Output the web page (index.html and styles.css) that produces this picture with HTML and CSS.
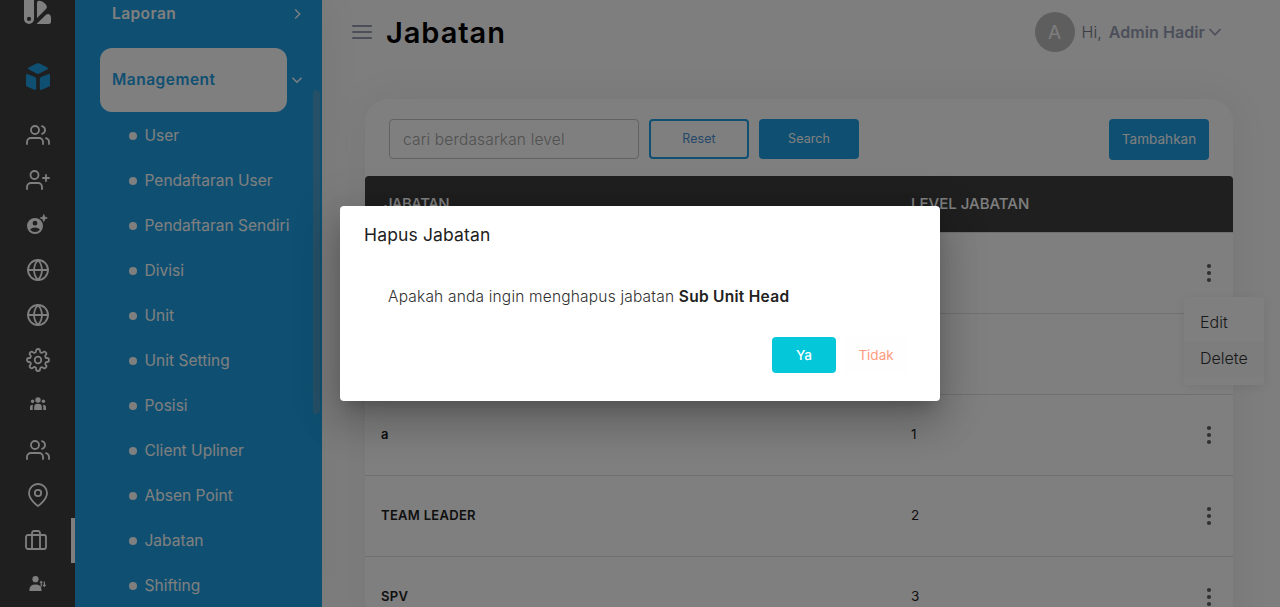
FILE: index.html
```html
<!DOCTYPE html>
<html lang="id">
<head>
<meta charset="utf-8">
<title>Jabatan</title>
<link rel="stylesheet" href="styles.css">
</head>
<body>
<svg class="defs" width="0" height="0" aria-hidden="true">
  <symbol id="users" viewBox="0 0 24 24"><path d="M17 21v-2a4 4 0 0 0-4-4H5a4 4 0 0 0-4 4v2M23 21v-2a4 4 0 0 0-3-3.870M16 3.130a4 4 0 0 1 0 7.750"/><circle cx="9" cy="7" r="4"/></symbol>
  <symbol id="globe" viewBox="0 0 24 24"><circle cx="12" cy="12" r="10"/><path d="M2 12h20M12 2a15.300 15.300 0 0 1 4 10 15.300 15.300 0 0 1-4 10 15.300 15.300 0 0 1-4-10 15.300 15.300 0 0 1 4-10z"/></symbol>
  <symbol id="dots" viewBox="0 0 6 20"><circle cx="3" cy="3" r="2.100"/><circle cx="3" cy="10" r="2.100"/><circle cx="3" cy="17" r="2.100"/></symbol>
</svg>
<div class="app">
  <nav class="rail">
    <div class="logo"><svg width="28" height="28" viewBox="0 0 28 28"><path fill-rule="evenodd" d="M0 0h10v23a5 5 0 0 1-10 0zM5 20.800a2.100 2.100 0 1 0 0 4.200a2.100 2.100 0 0 0 0-4.200z"/><path d="M13 7q0-2.500 2.500-2.200 4.500.7 7 4.700 1 2-.5 3.500L13 22zM12.500 28L22 18.800q2-1.600 3.700-.3 1.300 1.300 1.300 3.500v3.500q0 2.500-2.500 2.500z"/></svg></div>
    <div class="cube"><svg width="24" height="27" viewBox="0 0 24 27"><path d="M10.500.5q1.500-.7 3 0l7.900 4q1.300.9 0 1.800l-7.900 4.200q-1.500.7-3 0L2.600 6.300q-1.300-.9 0-1.800zM0 12.500q0-2 2-1.300l6.800 2.800q1.400.7 1.400 2V25.500q0 1.900-1.800 1.200L1.200 23.700Q0 23.100 0 21.900zM24 12.500q0-2-2-1.300l-6.800 2.800q-1.400.7-1.400 2V25.500q0 1.900 1.800 1.200L22.800 23.700Q24 23.100 24 21.900z"/></svg></div>
    <div class="ric"><svg class="line" width="24" height="24"><use href="#users"/></svg></div>
    <div class="ric"><svg class="line" width="24" height="24" viewBox="0 0 24 24"><path d="M16 21v-2a4 4 0 0 0-4-4H5a4 4 0 0 0-4 4v2M20 7v6M23 10h-6"/><circle cx="8.500" cy="7" r="4"/></svg></div>
    <div class="ric"><svg width="22" height="22" viewBox="0 0 22 22"><path fill-rule="evenodd" d="M8 4a8 8 0 1 0 0 16A8 8 0 0 0 8 4zM8 6.800a2.400 2.400 0 1 1 0 4.800a2.400 2.400 0 0 1 0-4.800zM8 13.500q3 0 5 2q-2 2.600-5 2.600t-5-2.600q2-2 5-2z"/><path d="M16.800.5l1 2.500 2.500 1-2.500 1-1 2.500-1-2.500-2.500-1 2.500-1z" stroke="#fff" stroke-width=".8"/></svg></div>
    <div class="ric"><svg class="line" width="24" height="24"><use href="#globe"/></svg></div>
    <div class="ric"><svg class="line" width="24" height="24"><use href="#globe"/></svg></div>
    <div class="ric"><svg class="line" width="24" height="24" viewBox="0 0 24 24"><circle cx="12" cy="12" r="3.300"/><path d="M19.400 15a1.650 1.650 0 0 0 .33 1.820l.06.060a2 2 0 0 1-2.830 2.830l-.06-.06a1.650 1.650 0 0 0-2.800 1.170V21a2 2 0 0 1-4 0v-.09a1.650 1.650 0 0 0-2.900-1.260l-.06.060a2 2 0 0 1-2.830-2.830l.06-.06A1.650 1.650 0 0 0 3.090 14H3a2 2 0 0 1 0-4h.09a1.650 1.650 0 0 0 1.260-2.820l-.06-.06a2 2 0 0 1 2.830-2.830l.06.060A1.650 1.650 0 0 0 10 3.090V3a2 2 0 0 1 4 0v.09a1.650 1.650 0 0 0 2.820 1.260l.06-.06a2 2 0 0 1 2.830 2.830l-.06.060A1.650 1.650 0 0 0 20.910 10H21a2 2 0 0 1 0 4h-.09a1.650 1.650 0 0 0-1.510 1z"/></svg></div>
    <div class="ric up"><svg width="16" height="14" viewBox="0 0 16 14"><circle cx="8" cy="3" r="2.700"/><circle cx="2.600" cy="4.200" r="1.700"/><circle cx="13.400" cy="4.200" r="1.700"/><path d="M4.200 13V10a3.800 3.200 0 0 1 7.600 0v3zM0 13v-2.500Q0 8 2.800 7.800v.7Q2.700 9 2.700 10v3zM16 13v-2.500Q16 8 13.200 7.800v.7q.1.500.1 1.500v3z"/></svg></div>
    <div class="ric"><svg class="line" width="24" height="24"><use href="#users"/></svg></div>
    <div class="ric"><svg class="line" width="24" height="24" viewBox="0 0 24 24"><path d="M21 10c0 7-9 13-9 13s-9-6-9-13a9 9 0 0 1 18 0z"/><circle cx="12" cy="10" r="3.200"/></svg></div>
    <div class="ric active"><svg class="line" width="24" height="24" viewBox="0 0 24 24"><rect x="2" y="7" width="20" height="14" rx="2"/><path d="M16 21V5a2 2 0 0 0-2-2h-4a2 2 0 0 0-2 2v16"/></svg></div>
    <div class="ric up"><svg width="18" height="16" viewBox="0 0 18 16"><circle cx="6.500" cy="3.200" r="3.100"/><path d="M.4 15v-1.500Q.8 8.500 6.500 8.500t6 5V15zM10.400 6.700l1.800-2.200 1.800 2.200H12.800v4h-1.200v-4zM13.200 8.700h1.500v-3.200h1.200v3.200h1.500l-2.100 2.500z"/></svg></div>
  </nav>

  <aside class="side">
    <div class="group first"><b class="laporan">Laporan</b><svg class="chev" width="12" height="12" viewBox="0 0 12 12"><path d="M4.200 1.500L8.700 6l-4.500 4.500"/></svg></div>
    <div class="group"><div class="pill"><b class="mgmt">Management</b></div><svg class="chev" width="12" height="12" viewBox="0 0 12 12"><path d="M1.500 3.800L6 8.300l4.500-4.500"/></svg></div>
    <ul class="items">
      <li>User</li><li>Pendaftaran User</li><li>Pendaftaran Sendiri</li><li>Divisi</li><li>Unit</li><li>Unit Setting</li><li>Posisi</li><li>Client Upliner</li><li>Absen Point</li><li>Jabatan</li><li>Shifting</li>
    </ul>
    <div class="thumb"></div>
  </aside>

  <main class="main">
    <header class="top">
      <svg class="burger" width="20" height="16" viewBox="0 0 20 16"><path d="M1 2h18M1 8h18M1 14h18"/></svg>
      <h1>Jabatan</h1>
      <div class="account">
        <span class="avatar">A</span><span class="hi">Hi,</span><b>Admin Hadir</b>
        <svg width="14" height="10" viewBox="0 0 14 10"><path d="M1.500 2L7 7.800 12.500 2"/></svg>
      </div>
    </header>
    <section class="card">
      <div class="tools">
        <div class="search">cari berdasarkan level</div>
        <button class="btn outline">Reset</button>
        <button class="btn">Search</button>
        <button class="btn add">Tambahkan</button>
      </div>
      <div class="thead"><span class="col-name">JABATAN</span><span>LEVEL JABATAN</span></div>
      <div class="row"><b></b><span></span><svg width="6" height="20"><use href="#dots"/></svg></div>
      <div class="row"><b></b><span></span><svg width="6" height="20"><use href="#dots"/></svg></div>
      <div class="row"><b>a</b><span>1</span><svg width="6" height="20"><use href="#dots"/></svg></div>
      <div class="row"><b>TEAM LEADER</b><span>2</span><svg width="6" height="20"><use href="#dots"/></svg></div>
      <div class="row"><b>SPV</b><span>3</span><svg width="6" height="20"><use href="#dots"/></svg></div>
    </section>
  </main>

  <div class="menu"><div>Edit</div><div class="hover">Delete</div></div>

  <div class="backdrop">
    <div class="dialog" role="dialog">
      <h2>Hapus Jabatan</h2>
      <p><span>Apakah anda ingin menghapus jabatan</span> <b>Sub Unit Head</b></p>
      <div class="actions"><button class="yes">Ya</button><button class="no">Tidak</button></div>
    </div>
  </div>
</div>
</body>
</html>
```

FILE: styles.css
```css
* { box-sizing: border-box; margin: 0; padding: 0; }
body { font-family: Inter, "Open Sans", sans-serif; font-size: 16px; background: #fcfcfc; color: #212121; overflow: hidden; }
button { font-family: inherit; border: 0; }
svg { display: block; flex: none; }
.defs { position: absolute; }
.app { display: flex; height: 607px; overflow: hidden; position: relative; }

.rail { width: 75px; background: #3e3e3e; flex: none; display: flex; flex-direction: column; align-items: center; padding-left: 1px; position: relative; z-index: 2; }
.rail svg { fill: #fff; }
.rail .line { fill: none; stroke: #fff; stroke-width: 1.8; stroke-linecap: round; stroke-linejoin: round; }
.logo { height: 24px; display: flex; align-items: flex-end; flex: none; }
.cube { height: 88.5px; padding-top: 39px; flex: none; }
.rail .cube svg { fill: #1ea0e4; }
.ric { height: 45px; width: 74px; flex: none; display: flex; align-items: center; justify-content: center; }
.ric.up { padding-bottom: 3px; }
.ric.active { border-right: 4px solid #fff; }

.side { width: 247px; background: #1ea0e4; color: #fff; flex: none; position: relative; z-index: 1; box-shadow: 0 0 40px rgba(0, 40, 30, .07); }
.group { display: flex; align-items: center; justify-content: space-between; padding: 0 19px 0 25px; height: 64px; }
.group.first { height: 28px; margin-bottom: 20px; padding-left: 37px; }
.group b { font-weight: 600; padding-bottom: 1px; }
.laporan { font-size: 15.5px; letter-spacing: .42px; }
.mgmt { font-size: 15.5px; letter-spacing: .5px; }
.pill { width: 187px; height: 64px; border-radius: 12px; background: #fff; color: #1ea0e4; display: flex; align-items: center; padding-left: 12px; }
.chev { fill: none; stroke: #fff; stroke-width: 1.4; }
.items { list-style: none; padding-top: 1px; }
.items li { height: 45px; display: flex; align-items: center; padding-left: 54px; gap: 7.5px; font-size: 15.5px; font-weight: 400; letter-spacing: .02px; white-space: nowrap; }
.items li::before { content: ""; width: 8px; height: 8px; border-radius: 50%; background: #fff; }
.thumb { position: absolute; left: 238px; top: 90px; width: 7px; height: 324px; border-radius: 4px; background: #4aa0cf; }

.main { flex: 1; padding: 0 47px 0 43px; }
.top { display: flex; align-items: center; height: 64px; margin: 0 11px 35px -13px; }
.burger { fill: none; stroke: #989eb5; stroke-width: 2; stroke-linecap: round; }
h1 { font-size: 29px; font-weight: 600; color: #000; margin-left: 14px; letter-spacing: .95px; }
.account { margin-left: auto; display: flex; align-items: center; color: #989eb5; font-size: 16px; }
.account svg { fill: none; stroke: #989eb5; stroke-width: 1.8; margin-left: 3px; }
.avatar { width: 40px; height: 40px; border-radius: 50%; background: #bdbdbd; color: #fafafa; display: flex; align-items: center; justify-content: center; font-size: 19px; margin-right: 7px; }
.hi { color: #747985; margin-right: 7px; font-weight: 300; }
.account b { font-weight: 600; padding-bottom: 1px; letter-spacing: .08px; }

.card { background: #fff; border-radius: 24px 24px 0 0; box-shadow: 0 0 40px rgba(0, 40, 30, .07); height: 560px; }
.tools { display: flex; align-items: flex-start; gap: 10px; padding: 20px 24px 0; height: 77px; }
.search { width: 250px; height: 40px; border: 1px solid #c4c4c4; border-radius: 4px; color: #a2a2a2; padding-left: 13px; line-height: 39px; font-size: 15.5px; font-weight: 300; letter-spacing: .16px; }
.btn { width: 100px; height: 40px; border-radius: 4px; background: #1ea0e4; color: #fff; font-size: 12.5px; padding-bottom: 1px; letter-spacing: .05px; }
.outline { background: #fff; border: 2px solid #1ea0e4; color: #4a90d0; }
.add { margin-left: auto; height: 41px; font-size: 13.5px; }
.thead, .row { display: grid; grid-template-columns: 530px 1fr 6px; align-items: center; border-bottom: 1px solid #e0e0e0; }
.thead { background: #3e3e3e; color: #fff; height: 57px; font-size: 15px; font-weight: 450; border-radius: 4px 4px 0 0; padding: 0 21px 2px 19px; grid-template-columns: 527px 1fr; }
.col-name { letter-spacing: -.5px; }
.row { height: 81px; padding: 0 21px 0 16px; font-size: 13.5px; }
.row b { font-size: 13px; font-weight: 600; letter-spacing: .3px; padding-bottom: 2px; }
.row span { padding-bottom: 2px; }
.row svg { fill: #616161; }

.menu { position: absolute; left: 1184px; top: 297px; width: 80px; height: 88px; background: #fff; border-radius: 4px; padding-top: 8px; box-shadow: 0 2px 12px rgba(0, 0, 0, .08); z-index: 3; color: #333; font-weight: 300; }
.menu div { height: 36px; line-height: 35px; padding-left: 16px; }
.menu .hover { background: #fafafa; }

.backdrop { position: absolute; inset: 0; background: rgba(0, 0, 0, .5); display: flex; align-items: center; justify-content: center; z-index: 4; }
.dialog { width: 600px; height: 195px; background: #fff; border-radius: 4px; padding: 16px 24px 0; box-shadow: 0 11px 15px -7px rgba(0,0,0,.2), 0 24px 38px 3px rgba(0,0,0,.14), 0 9px 46px 8px rgba(0,0,0,.12); }
.dialog h2 { font-size: 17.5px; font-weight: 400; line-height: 26px; letter-spacing: .15px; }
.dialog p { padding: 36px 24px 0; line-height: 26px; color: #303030; font-size: 15.5px; font-weight: 300; white-space: nowrap; letter-spacing: .19px; }
.dialog p b { font-weight: 600; font-size: 15.5px; color: #212121; letter-spacing: .28px; }
.actions { display: flex; justify-content: flex-end; gap: 8px; margin-top: 27px; padding-right: 8px; }
.actions button { height: 36px; width: 64px; border-radius: 4px; font-size: 13.5px; font-weight: 400; padding-bottom: 1px; }
.actions .yes { background: #04c8d9; color: #fff; font-weight: 500; }
.no { background: #fefefe; color: #ff9c7e; }
```
